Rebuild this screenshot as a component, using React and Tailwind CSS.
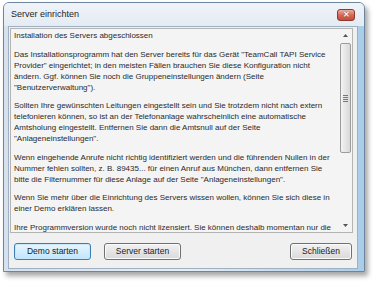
import React from 'react';

const paragraphs = [
  [
    'Das Installationsprogramm hat den Server bereits für das Gerät "TeamCall TAPI Service',
    'Provider" eingerichtet; in den meisten Fällen brauchen Sie diese Konfiguration nicht',
    'ändern. Ggf. können Sie noch die Gruppeneinstellungen ändern (Seite',
    '"Benutzerverwaltung").',
  ],
  [
    'Sollten Ihre gewünschten Leitungen eingestellt sein und Sie trotzdem nicht nach extern',
    'telefonieren können, so ist an der Telefonanlage wahrscheinlich eine automatische',
    'Amtsholung eingestellt. Entfernen Sie dann die Amtsnull auf der Seite',
    '"Anlageneinstellungen".',
  ],
  [
    'Wenn eingehende Anrufe nicht richtig identifiziert werden und die führenden Nullen in der',
    'Nummer fehlen sollten, z. B. 89435... für einen Anruf aus München, dann entfernen Sie',
    'bitte die Filternummer für diese Anlage auf der Seite "Anlageneinstellungen".',
  ],
  [
    'Wenn Sie mehr über die Einrichtung des Servers wissen wollen, können Sie sich diese in',
    'einer Demo erklären lassen.',
  ],
  [
    'Ihre Programmversion wurde noch nicht lizensiert. Sie können deshalb momentan nur die',
  ],
];

const Button = ({ children, width, primary }) => (
  <button
    className={
      primary
        ? `h-[17px] ${width} rounded-[3px] border border-[#3c7fb1] bg-gradient-to-b from-[#eaf6fd] to-[#bee6fd] text-[8.5px] text-[#1a1a1a] shadow-[inset_0_0_0_1px_#c8e7fa]`
        : `h-[17px] ${width} rounded-[3px] border border-[#707070] bg-gradient-to-b from-[#f2f2f2] to-[#d9d9d9] text-[8.5px] text-[#1a1a1a] shadow-[inset_0_0_0_1px_#fbfbfb]`
    }
  >
    {children}
  </button>
);

export default function App() {
  return (
    <div className="w-[375px] h-[284px] bg-white overflow-hidden font-['Liberation_Sans',Arial,sans-serif]">
      <div className="ml-[3px] mt-[2px] w-[362px] h-[270px] rounded-t-[6px] border border-[#6d859d] bg-gradient-to-r from-[#d6e1ed] via-[#e7eef5] to-[#a9cde9] shadow-[3px_4px_5px_rgba(0,0,0,0.35)] flex flex-col">
        {/* title bar */}
        <div className="h-[23px] flex items-center justify-between pl-[7px] pr-[9px] rounded-t-[5px] bg-gradient-to-b from-[#f0f4f9] to-[#e4ebf3]">
          <span className="text-[9px] text-[#1e1e1e]">Server einrichten</span>
          <div className="w-[18px] h-[12px] rounded-[3px] border border-[#8a3a2e] bg-gradient-to-b from-[#eab0a4] via-[#d6685a] to-[#c9493a] flex items-center justify-center">
            <span className="text-[8px] leading-none font-bold text-white [text-shadow:0_0_1px_#5a1a10]">✕</span>
          </div>
        </div>
        {/* client area */}
        <div className="ml-[4px] mr-[6px] mb-[2px] flex-1 bg-[#f0f0f0] border border-[#9fb0c2] flex flex-col pt-[1px] pl-[1px] pr-[4px]">
          <div className="h-[205px] border border-[#b4b4b4] bg-[#f4f4f4] flex">
            <div className="flex-1 overflow-hidden pl-[3px] pt-[1px] text-[8px] leading-[11px] text-[#2a2a2a] whitespace-nowrap">
              <p className="mb-[7.5px]">Installation des Servers abgeschlossen</p>
              {paragraphs.map((lines, i) => (
                <p key={i} className="mb-[7.5px]">
                  {lines.map((l, j) => (
                    <span key={j} className="block">{l}</span>
                  ))}
                </p>
              ))}
            </div>
            {/* scrollbar */}
            <div className="w-[14px] flex flex-col items-center bg-[#f4f4f4]">
              <div className="h-[13px] w-full flex items-center justify-center">
                <svg width="5" height="3" viewBox="0 0 5 3"><path d="M0 3 L2.5 0 L5 3 Z" fill="#555" /></svg>
              </div>
              <div className="mt-[1px] h-[110px] w-[11px] rounded-[2px] border border-[#9c9c9c] bg-gradient-to-r from-[#f3f3f3] to-[#d8d8d8] flex items-center justify-center">
                <div className="flex flex-col gap-[1px]">
                  <div className="w-[5px] h-[1px] bg-[#777]" />
                  <div className="w-[5px] h-[1px] bg-[#777]" />
                  <div className="w-[5px] h-[1px] bg-[#777]" />
                  <div className="w-[5px] h-[1px] bg-[#777]" />
                </div>
              </div>
              <div className="flex-1" />
              <div className="h-[13px] w-full flex items-center justify-center">
                <svg width="5" height="3" viewBox="0 0 5 3"><path d="M0 0 L2.5 3 L5 0 Z" fill="#555" /></svg>
              </div>
            </div>
          </div>
          <div className="mt-[10px] flex items-center pl-[4px] pr-[1px]">
            <Button width="w-[77px]" primary>Demo starten</Button>
            <div className="w-[13px]" />
            <Button width="w-[77px]">Server starten</Button>
            <div className="flex-1" />
            <Button width="w-[62px]">Schließen</Button>
          </div>
        </div>
      </div>
    </div>
  );
}
